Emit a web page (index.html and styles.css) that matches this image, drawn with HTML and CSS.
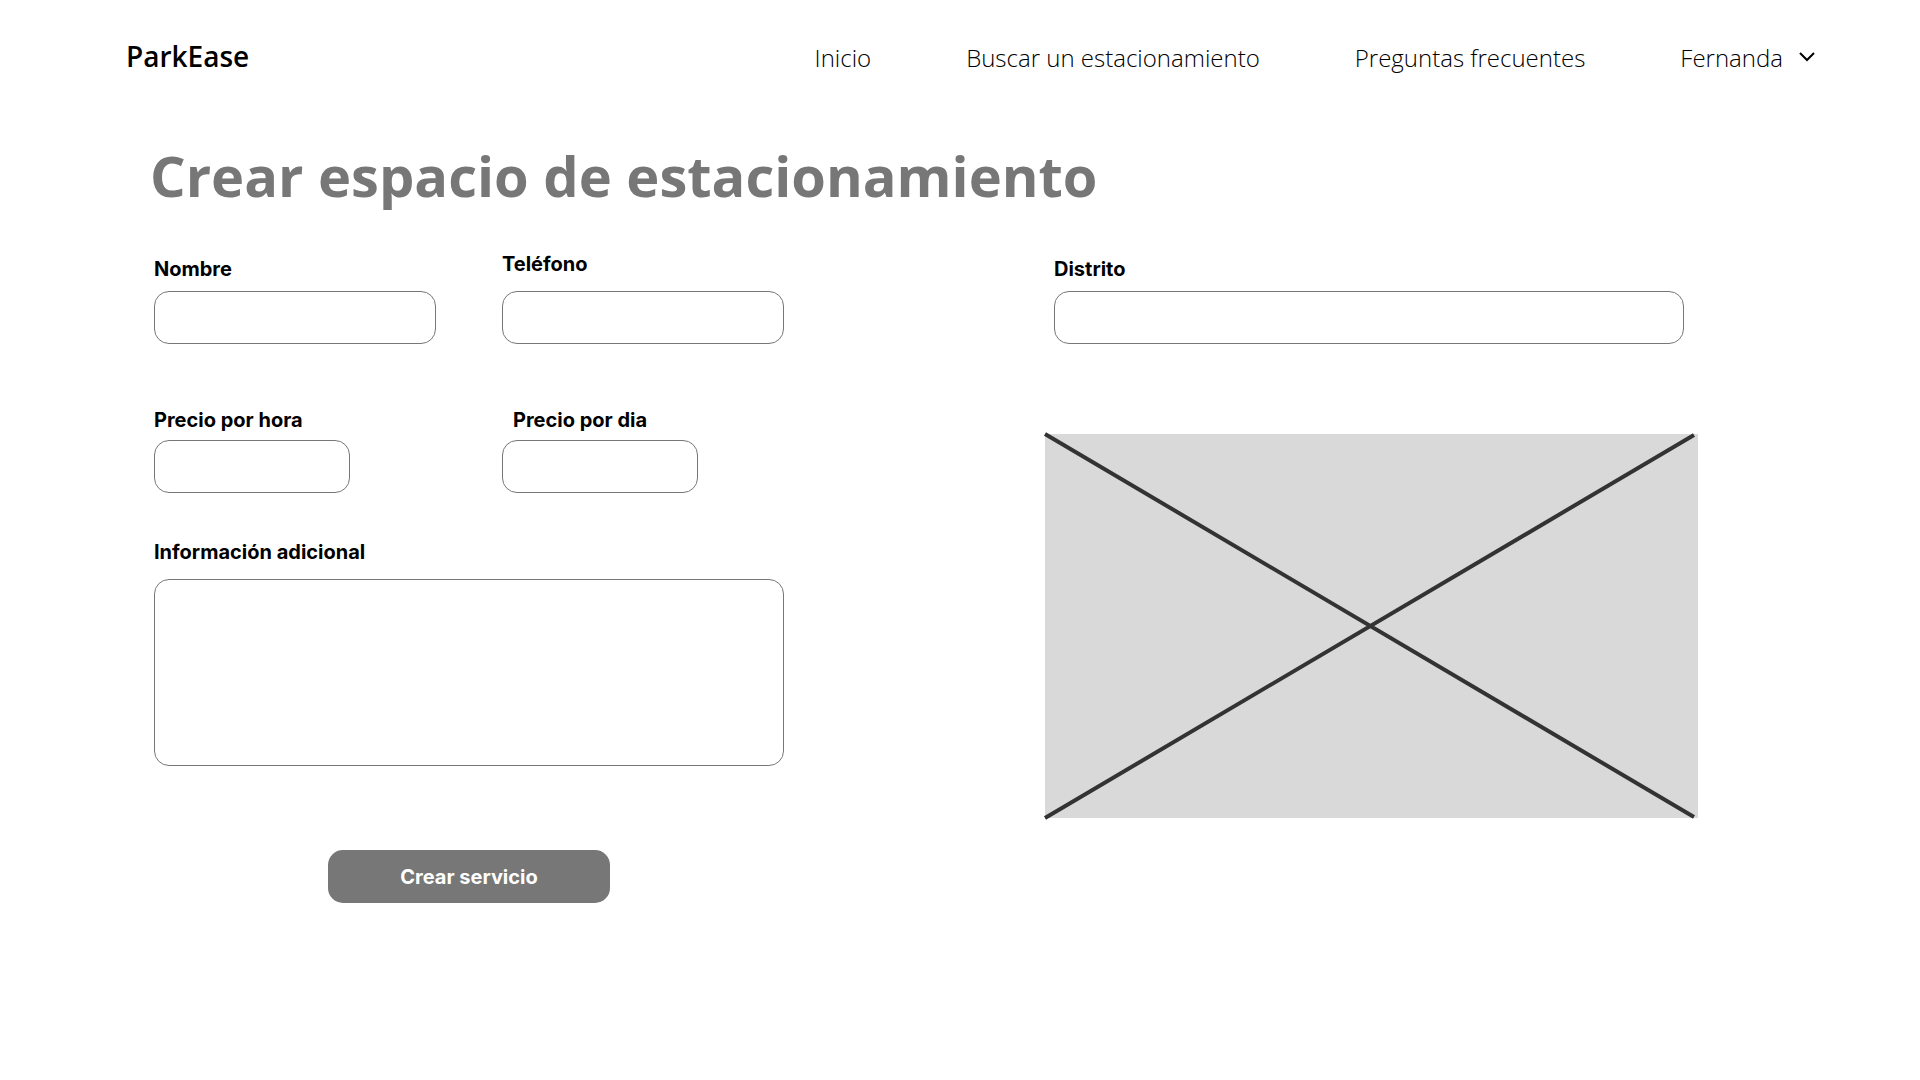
FILE: index.html
```html
<!DOCTYPE html>
<html lang="es">
<head>
  <meta charset="utf-8">
  <meta name="viewport" content="width=device-width, initial-scale=1">
  <title>ParkEase - Crear espacio de estacionamiento</title>
  <link rel="stylesheet" href="styles.css">
</head>
<body>
  <header class="header">
    <a class="brand" href="#">ParkEase</a>
    <nav class="nav">
      <a class="nav-link" href="#">Inicio</a>
      <a class="nav-link" href="#">Buscar un estacionamiento</a>
      <a class="nav-link" href="#">Preguntas frecuentes</a>
      <button class="nav-link user-menu" type="button">
        Fernanda
        <svg class="chevron" viewBox="0 0 16 12" aria-hidden="true"><path d="M1 1 8 8 15 1" fill="none" stroke="#000" stroke-width="2"/></svg>
      </button>
    </nav>
  </header>

  <main class="main">
    <h1 class="title">Crear espacio de estacionamiento</h1>
    <form class="form">
      <div class="details">
        <div class="field-row">
          <div class="field">
            <label class="label" for="nombre">Nombre</label>
            <input class="input" id="nombre" type="text">
          </div>
          <div class="field field-spaced">
            <label class="label" for="telefono">Teléfono</label>
            <input class="input" id="telefono" type="tel">
          </div>
        </div>
        <div class="field-row price-row">
          <div class="field field-price">
            <label class="label" for="precio-hora">Precio por hora</label>
            <input class="input" id="precio-hora" type="text">
          </div>
          <div class="field field-price">
            <label class="label label-indented" for="precio-dia">Precio por dia</label>
            <input class="input" id="precio-dia" type="text">
          </div>
        </div>
        <div class="field field-spaced info-field">
          <label class="label" for="info">Información adicional</label>
          <textarea class="input textarea" id="info"></textarea>
        </div>
        <button class="submit" type="submit">Crear servicio</button>
      </div>

      <div class="location">
        <div class="field district-field">
          <label class="label" for="distrito">Distrito</label>
          <input class="input" id="distrito" type="text">
        </div>
        <svg class="placeholder" viewBox="0 0 653 384" role="img" aria-label="Imagen del estacionamiento">
          <rect width="653" height="384" fill="#d9d9d9"/>
          <path d="M0 0 649 383M0 384 649 1" stroke="#333" stroke-width="4"/>
        </svg>
      </div>
    </form>
  </main>
</body>
</html>
```
FILE: styles.css
```css
* {
  box-sizing: border-box;
}

body {
  margin: 0;
  background: #fff;
  color: #000;
  font-family: "Open Sans", sans-serif;
}

.header {
  display: flex;
  flex-wrap: wrap;
  align-items: baseline;
  justify-content: space-between;
  gap: 16px;
  padding: 37px 105px 0 126px;
}

.brand {
  color: inherit;
  font-size: 28px;
  font-weight: 600;
  line-height: 38px;
  text-decoration: none;
}

.nav {
  display: flex;
  flex-wrap: wrap;
  align-items: baseline;
  gap: 16px 95px;
}

.nav-link {
  color: inherit;
  font-size: 24px;
  font-weight: 300;
  line-height: 33px;
  text-decoration: none;
}

.user-menu {
  display: flex;
  align-items: center;
  gap: 16px;
  padding: 0;
  border: 0;
  background: none;
  font-family: inherit;
  cursor: pointer;
}

.chevron {
  width: 16px;
  height: 12px;
}

.main {
  padding: 62px 222px 64px 154px;
}

.title {
  margin: 0 0 39px -4px;
  color: #777;
  font-size: 56px;
  font-weight: 700;
  line-height: 76px;
}

.form {
  display: grid;
  grid-template-columns: 630fr 653fr;
  gap: 261px;
  align-items: start;
  font-family: Inter, sans-serif;
}

.details {
  display: flex;
  flex-direction: column;
}

.field-row {
  display: grid;
  grid-template-columns: 1fr 1fr;
  gap: 66px;
  align-items: end;
}

.price-row {
  margin-top: 64px;
}

.field {
  display: flex;
  flex-direction: column;
  gap: 10px;
}

.field-spaced {
  gap: 15px;
}

.field-price {
  gap: 8px;
  max-width: 196px;
}

.label {
  font-size: 20px;
  font-weight: 700;
  line-height: 24px;
}

.label-indented {
  padding-left: 11px;
}

.input {
  width: 100%;
  height: 53px;
  padding: 0 16px;
  border: 1px solid #777;
  border-radius: 15px;
  background: #fff;
  font: inherit;
  font-size: 20px;
}

.info-field {
  margin-top: 47px;
}

.textarea {
  height: 187px;
  padding: 16px;
  resize: none;
}

.submit {
  align-self: center;
  width: 282px;
  height: 53px;
  margin-top: 84px;
  border: 0;
  border-radius: 15px;
  background: #777;
  color: #fff;
  font-family: inherit;
  font-size: 20px;
  font-weight: 700;
  line-height: 24px;
  cursor: pointer;
}

.location {
  display: flex;
  flex-direction: column;
  gap: 90px;
  padding-top: 5px;
}

.district-field {
  padding: 0 14px 0 9px;
}

.placeholder {
  width: 100%;
  height: auto;
  overflow: visible;
}

@media (max-width: 1500px) {
  .main {
    padding: 40px 64px;
  }

  .header {
    padding: 32px 64px 0;
  }

  .nav {
    gap: 16px 40px;
  }

  .form {
    gap: 64px;
  }
}
```
